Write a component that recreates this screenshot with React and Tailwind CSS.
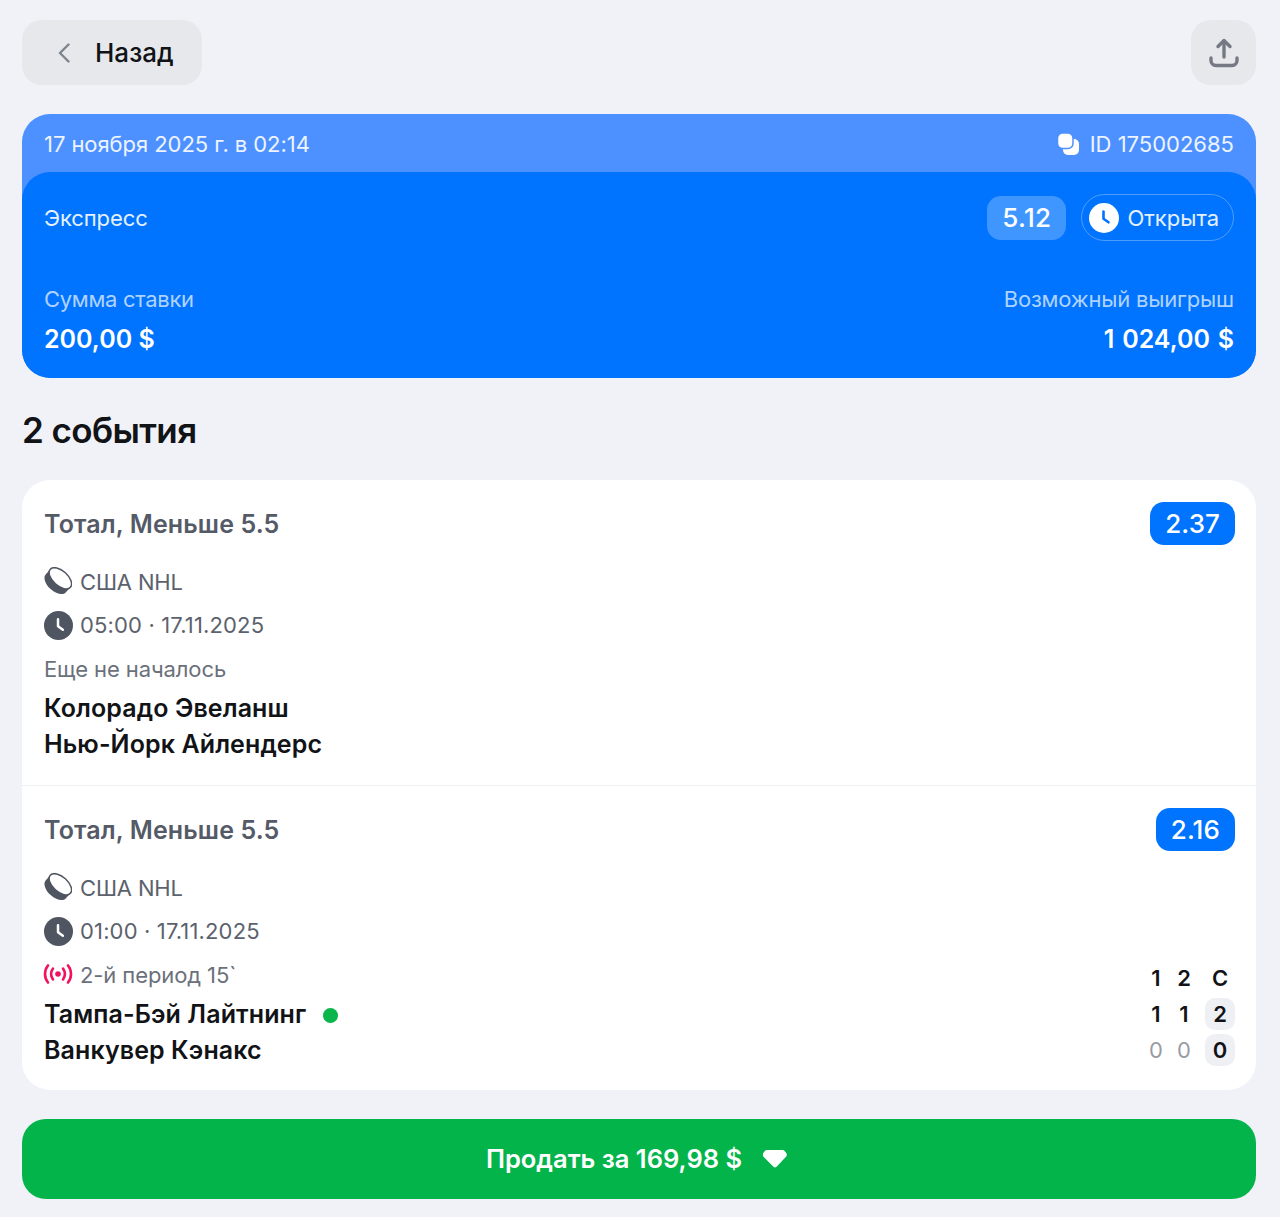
import React from 'react';

function ClockIcon({ className, hand }) {
  return (
    <svg viewBox="0 0 30 30" className={className}>
      <circle cx="15" cy="15" r="15" fill="currentColor" />
      <path d="M14.500 8.500v7.200l5 3.600" fill="none" stroke={hand} strokeWidth="2.600" strokeLinecap="round" strokeLinejoin="round" />
    </svg>
  );
}

function PuckIcon() {
  return (
    <svg viewBox="0 0 30 30" className="w-[30px] h-[30px] shrink-0 -ml-[2px]">
      <g transform="rotate(42 15 15)">
        <path d="M1.500 11v6c0 4 6 7.500 13.500 7.500S28.500 21 28.500 17v-6z" fill="#4f5561" />
        <ellipse cx="15" cy="10" rx="13.500" ry="7.500" fill="#fff" stroke="#4f5561" strokeWidth="1.500" />
      </g>
    </svg>
  );
}

function LiveIcon() {
  return (
    <svg viewBox="0 0 30 20" className="w-[30px] h-[20px] shrink-0 -mt-[2px] -ml-px mr-px" fill="none" stroke="#f0125f" strokeWidth="2.600" strokeLinecap="round">
      <path d="M5 1.500c-4 4.800-4 12.200 0 17" />
      <path d="M10 4.500c-2.300 3.300-2.300 7.700 0 11" />
      <path d="M20 4.500c2.300 3.300 2.300 7.700 0 11" />
      <path d="M25 1.500c4 4.800 4 12.200 0 17" />
      <circle cx="15" cy="10" r="2.800" fill="#f0125f" stroke="none" />
    </svg>
  );
}

function EventBlock({ odds, time, status, live, teams, score, last }) {
  return (
    <div className={`pl-[22px] pr-[21px] pt-[22px] ${last ? 'pb-[21px]' : 'pb-[22px] border-b border-[#eef0f3]'}`}>
      <div className="flex items-center justify-between h-[43px]">
        <span className="text-[25px] font-semibold tracking-[0.12px] text-[#545a66] translate-y-px">Тотал, Меньше 5.5</span>
        <span className="h-[43px] px-[15px] flex items-center rounded-[14px] bg-[#0073ff] text-white text-[26px] font-medium tracking-[0.1px]">{odds}</span>
      </div>
      <div className="mt-[15px] h-[44px] flex items-center gap-[8px] text-[22px] tracking-[-0.15px] text-[#5c626d]">
        <PuckIcon />
        <span>США NHL</span>
      </div>
      <div className="h-[43px] flex items-center gap-[7px] text-[22px] tracking-[0.15px] text-[#5c626d]">
        <ClockIcon className="w-[29px] h-[29px] shrink-0 text-[#4f5561]" hand="#fff" />
        <span>{time}</span>
      </div>
      <div className="flex justify-between">
        <div className="flex-1">
          <div className="h-[44px] flex items-center gap-[6px] text-[22px] tracking-[-0.1px] text-[#6b707b]">
            {live && <LiveIcon />}
            <span>{status}</span>
          </div>
          <div className="h-[36px] flex items-center text-[25px] font-semibold tracking-[0.1px] text-[#111317]">
            {teams[0]}
            {live && <span className="ml-[17px] w-[15px] h-[15px] rounded-full bg-[#0ab54c]" />}
          </div>
          <div className="h-[36px] flex items-center text-[25px] font-semibold tracking-[0.1px] text-[#111317]">{teams[1]}</div>
        </div>
        {score && (
          <div className="flex flex-col items-end pt-[7px]">
            {score.map((row, i) => (
              <div key={i} className="h-[36px] flex items-center text-[22px] font-semibold">
                <span className={`w-[28px] text-center ${row.muted ? 'font-normal text-[#999ca3]' : 'text-[#111317]'}`}>{row.cells[0]}</span>
                <span className={`w-[28px] text-center ${row.muted ? 'font-normal text-[#999ca3]' : 'text-[#111317]'}`}>{row.cells[1]}</span>
                <span className={`w-[30px] h-[32px] ml-[7px] flex items-center justify-center rounded-[10px] text-[#111317] ${i > 0 ? 'bg-[#eff0f4]' : ''}`}>{row.cells[2]}</span>
              </div>
            ))}
          </div>
        )}
      </div>
    </div>
  );
}

export default function App() {
  return (
    <div className="min-h-[1217px] bg-[#f0f2f8] pl-[22px] pr-[24px] pt-[20px] font-['Inter',sans-serif]">
      <div className="flex items-center justify-between">
        <button className="w-[180px] h-[65px] pl-[36px] flex items-center gap-[25px] rounded-[20px] bg-[#e6e8ec] text-[26px] font-medium text-[#111317]">
          <svg viewBox="0 0 12 20" className="w-[12px] h-[20px]" fill="none" stroke="#7d828c" strokeWidth="2.400" strokeLinecap="round" strokeLinejoin="round">
            <path d="M10.500 1.500 2 10l8.500 8.500" />
          </svg>
          Назад
        </button>
        <button className="w-[65px] h-[65px] flex items-center justify-center rounded-[20px] bg-[#e6e8ec]">
          <svg viewBox="0 0 30 30" className="w-[30px] h-[30px]" fill="none" stroke="#747984" strokeWidth="3.400" strokeLinecap="round" strokeLinejoin="round">
            <path d="M15 19V3" />
            <path d="M9 8.500 15 2.500 21 8.500" />
            <path d="M2 20v2.500a5 5 0 0 0 5 5h16a5 5 0 0 0 5-5V20" />
          </svg>
        </button>
      </div>

      <div className="mt-[29px] rounded-[28px] bg-[#4d90ff]">
        <div className="h-[58px] px-[22px] pt-[2px] flex items-center justify-between text-[22px] text-white/90">
          <span className="tracking-[-0.06px]">17 ноября 2025 г. в 02:14</span>
          <span className="flex items-center gap-[11px]">
            <svg viewBox="0 0 22 22" className="w-[22px] h-[22px]" fill="#fff">
              <rect x="6" y="6" width="16" height="16" rx="5" />
              <rect x="0.500" y="0" width="15.500" height="15.500" rx="5" stroke="#4d90ff" strokeWidth="1.500" />
            </svg>
            ID 175002685
          </span>
        </div>
        <div className="h-[206px] px-[22px] rounded-[28px] bg-[#0073ff] text-white">
          <div className="pt-[22px] flex items-center justify-between">
            <span className="text-[22px] tracking-[-0.1px] text-white/90 translate-y-px">Экспресс</span>
            <div className="flex items-center gap-[15px]">
              <span className="h-[44px] px-[15px] flex items-center rounded-[14px] bg-white/25 text-[26px] font-medium tracking-[0.3px]">5.12</span>
              <span className="h-[47px] pl-[7px] pr-[14px] flex items-center gap-[8px] rounded-full border border-white/30 text-[22px] text-white/90">
                <ClockIcon className="w-[30px] h-[30px] text-white" hand="#0073ff" />
                <span className="translate-y-px">Открыта</span>
              </span>
            </div>
          </div>
          <div className="mt-[41.500px] flex justify-between">
            <div>
              <div className="text-[22px] tracking-[-0.3px] text-white/70">Сумма ставки</div>
              <div className="mt-[5.750px] text-[25px] font-semibold">200,00 $</div>
            </div>
            <div className="text-right">
              <div className="text-[22px] tracking-[-0.2px] text-white/70">Возможный выигрыш</div>
              <div className="mt-[5.750px] text-[25px] font-semibold [word-spacing:1.500px]">1 024,00 $</div>
            </div>
          </div>
        </div>
      </div>

      <h2 className="mt-[30px] h-[44px] flex items-center text-[35px] font-semibold tracking-[-0.6px] text-[#111317]">2 события</h2>

      <div className="mt-[28px] rounded-[28px] bg-white overflow-hidden">
        <EventBlock
          odds="2.37"
          time="05:00 · 17.11.2025"
          status="Еще не началось"
          teams={['Колорадо Эвеланш', 'Нью-Йорк Айлендерс']}
        />
        <EventBlock
          last
          live
          odds="2.16"
          time="01:00 · 17.11.2025"
          status="2-й период 15`"
          teams={['Тампа-Бэй Лайтнинг', 'Ванкувер Кэнакс']}
          score={[
            { cells: ['1', '2', 'С'] },
            { cells: ['1', '1', '2'] },
            { cells: ['0', '0', '0'], muted: true },
          ]}
        />
      </div>

      <button className="mt-[29px] w-full h-[80px] pr-[5px] flex items-center justify-center gap-[21px] rounded-[24px] bg-[#03b44b] text-white text-[25.500px] font-semibold">
        Продать за 169,98 $
        <svg viewBox="0 0 24 18" className="w-[24px] h-[18px]" fill="#fff">
          <path d="M4.500 0h15a3 3 0 0 1 2.400 1.200l1.300 1.700a3 3 0 0 1-.2 3.800L13.800 16.500a2.500 2.500 0 0 1-3.600 0L.5 6.700a3 3 0 0 1-.2-3.800L1.600 1.200A3 3 0 0 1 4.500 0z" />
        </svg>
      </button>
    </div>
  );
}
